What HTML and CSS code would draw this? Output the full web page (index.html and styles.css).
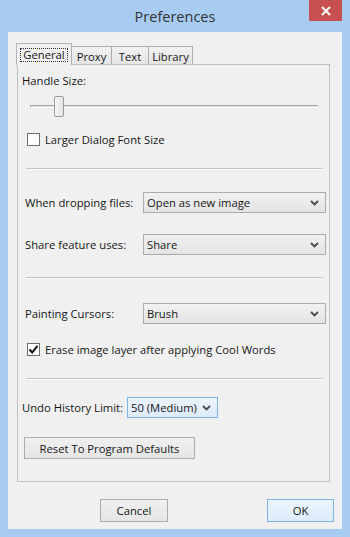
FILE: index.html
```html
<!DOCTYPE html>
<html>
<head>
<meta charset="utf-8">
<link rel="stylesheet" href="styles.css">
</head>
<body>
<div class="window">
  <div class="titlebar">
    <span class="title">Preferences</span>
    <div class="close">
      <svg width="12" height="10" viewBox="0 0 12 10"><path d="M2 1 L10 9 M10 1 L2 9" stroke="#fff" stroke-width="2" fill="none"/></svg>
    </div>
  </div>
  <div class="client">
    <div class="tabs">
      <div class="tabstrip">
        <div class="tab sel tab-general"><span class="focus">General</span></div>
        <div class="tab tab-proxy">Proxy</div>
        <div class="tab tab-text">Text</div>
        <div class="tab tab-library">Library</div>
      </div>
      <div class="panel">
        <div class="label handle">Handle Size:</div>
        <div class="slider">
          <div class="track"></div>
          <div class="thumb"></div>
        </div>
        <div class="check-row cr1">
          <span class="box"></span>
          <span class="ctext">Larger Dialog Font Size</span>
        </div>
        <div class="sep s1"></div>
        <div class="field-row r1">
          <span class="flabel">When dropping files:</span>
          <div class="combo wide"><span>Open as new image</span><svg class="arrow" width="9" height="6" viewBox="0 0 9 6"><path d="M1 1 L4.5 4.5 L8 1" stroke="#4a4a4a" stroke-width="1.8" fill="none"/></svg></div>
        </div>
        <div class="field-row r2">
          <span class="flabel">Share feature uses:</span>
          <div class="combo wide"><span>Share</span><svg class="arrow" width="9" height="6" viewBox="0 0 9 6"><path d="M1 1 L4.5 4.5 L8 1" stroke="#4a4a4a" stroke-width="1.8" fill="none"/></svg></div>
        </div>
        <div class="sep s2"></div>
        <div class="field-row r3">
          <span class="flabel">Painting Cursors:</span>
          <div class="combo wide"><span>Brush</span><svg class="arrow" width="9" height="6" viewBox="0 0 9 6"><path d="M1 1 L4.5 4.5 L8 1" stroke="#4a4a4a" stroke-width="1.8" fill="none"/></svg></div>
        </div>
        <div class="check-row cr2">
          <span class="box"><svg width="11" height="11" viewBox="0 0 11 11"><path d="M1.5 5.5 L4.2 8.5 L9.5 1.8" stroke="#111" stroke-width="2" fill="none"/></svg></span>
          <span class="ctext">Erase image layer after applying Cool Words</span>
        </div>
        <div class="sep s3"></div>
        <div class="undo-row">
          <span class="ulabel">Undo History Limit:</span>
          <div class="combo hot"><span>50 (Medium)</span><svg class="arrow" width="9" height="6" viewBox="0 0 9 6"><path d="M1 1 L4.5 4.5 L8 1" stroke="#4a4a4a" stroke-width="1.8" fill="none"/></svg></div>
        </div>
        <div class="btn reset">Reset To Program Defaults</div>
      </div>
    </div>
    <div class="buttons">
      <div class="btn cancel">Cancel</div>
      <div class="btn ok">OK</div>
    </div>
  </div>
</div>
</body>
</html>
```

FILE: styles.css
```css
* { box-sizing: border-box; }
html, body { margin: 0; padding: 0; }
body {
  width: 350px;
  height: 537px;
  font-family: "Open Sans", "Noto Sans", sans-serif;
  font-size: 11.25px;
  color: #161616;
}
.window {
  width: 350px;
  height: 537px;
  background: #a8ccf1;
  padding: 0 8px 8px 8px;
  display: flex;
  flex-direction: column;
}
.titlebar {
  height: 32px;
  position: relative;
  display: flex;
  align-items: center;
  justify-content: center;
}
.title {
  font-size: 14.5px;
  color: #333;
  margin-top: 1px;
}
.close {
  position: absolute;
  top: 0;
  right: 0;
  width: 33px;
  height: 21px;
  background: #c75050;
  display: flex;
  align-items: center;
  justify-content: center;
}
.client {
  flex: 1;
  background: #f0f0f0;
  padding: 11px 12px 7px 9px;
  display: flex;
  flex-direction: column;
}
.tabs { display: flex; flex-direction: column; }
.tabstrip {
  height: 21px;
  display: flex;
  align-items: flex-end;
  position: relative;
  z-index: 1;
}
.tab {
  height: 18px;
  border: 1px solid #acacac;
  border-bottom: none;
  background: linear-gradient(#f2f2f2, #e4e4e4);
  display: flex;
  align-items: center;
  justify-content: center;
  padding-top: 1px;
}
.tab.sel {
  height: 22px;
  margin-bottom: -1px;
  margin-left: -1px;
  background: #f0f0f0;
  border-color: #b4b4b4;
  padding-top: 0;
}
.tab-general { width: 56px; }
.tab-proxy { width: 41px; margin-left: -1px; }
.tab-text { width: 38px; margin-left: -1px; }
.tab-library { width: 45px; margin-left: -1px; }
.focus {
  border: 1px dotted #333;
  padding: 0 2px;
  line-height: 12px;
  height: 14px;
  display: flex;
  align-items: center;
}
.panel {
  height: 418px;
  border: 1px solid #bfbfbf;
  padding: 0 3px 0 4px;
  display: flex;
  flex-direction: column;
}
.label.handle {
  height: 16px;
  line-height: 16px;
  margin-top: 8px;
}
.slider {
  margin: 7px 8px 0 8px;
  height: 21px;
  display: grid;
}
.track {
  grid-area: 1 / 1;
  align-self: center;
  height: 3px;
  border-top: 1px solid #a8a8a8;
  border-left: 1px solid #a8a8a8;
  border-bottom: 1px solid #fdfdfd;
  background: #e3e3e3;
  margin-top: -1px;
}
.thumb {
  grid-area: 1 / 1;
  justify-self: start;
  margin-left: 24px;
  width: 10px;
  height: 21px;
  border: 1px solid #9c9c9c;
  border-radius: 2px;
  background: linear-gradient(90deg, #f6f6f6, #e4e4e4);
}
.check-row {
  height: 14px;
  display: flex;
  align-items: center;
  margin-left: 5px;
}
.cr1 { margin-top: 15px; }
.cr2 { margin-top: 18px; }
.box {
  width: 13px;
  height: 13px;
  border: 1px solid #6f6f6f;
  background: #fff;
  display: flex;
  align-items: center;
  justify-content: center;
  margin-right: 5px;
}
.sep {
  height: 2px;
  border-top: 1px solid #c4c4c4;
  border-bottom: 1px solid #fafafa;
  margin-left: 4px;
  margin-right: 3px;
}
.s1 { margin-top: 22px; }
.s2 { margin-top: 22px; }
.s3 { margin-top: 22px; }
.field-row {
  height: 21px;
  display: flex;
  align-items: center;
}
.r1 { margin-top: 22px; }
.r2 { margin-top: 21px; }
.r3 { margin-top: 24px; }
.flabel {
  width: 118px;
  margin-left: 3px;
}
.combo {
  height: 21px;
  border: 1px solid #acacac;
  background: linear-gradient(#f1f1f1, #e4e4e4);
  display: flex;
  align-items: center;
  justify-content: space-between;
  padding: 0 6px 0 3px;
}
.combo.wide { flex: 1; }
.combo.hot {
  width: 91px;
  border-color: #7eb4ea;
  background: linear-gradient(#ecf4fc, #dcecfc);
  padding-left: 3px;
}
.arrow { margin-top: 1px; }
.undo-row {
  height: 21px;
  margin-top: 17px;
  display: flex;
  align-items: center;
}
.ulabel { width: 105px; }
.btn {
  height: 22px;
  border: 1px solid #acacac;
  background: linear-gradient(#f0f0f0, #e5e5e5);
  display: flex;
  align-items: center;
  justify-content: center;
}
.btn.reset {
  width: 171px;
  margin-top: 19px;
  margin-left: 2px;
}
.buttons {
  margin-top: 17px;
  height: 23px;
  display: flex;
  justify-content: flex-end;
  gap: 99px;
  margin-right: -4px;
}
.btn.cancel { width: 68px; height: 23px; }
.btn.ok {
  width: 67px;
  height: 23px;
  border-color: #7eb4ea;
  background: linear-gradient(#ecf4fc, #dcecfc);
}
```
